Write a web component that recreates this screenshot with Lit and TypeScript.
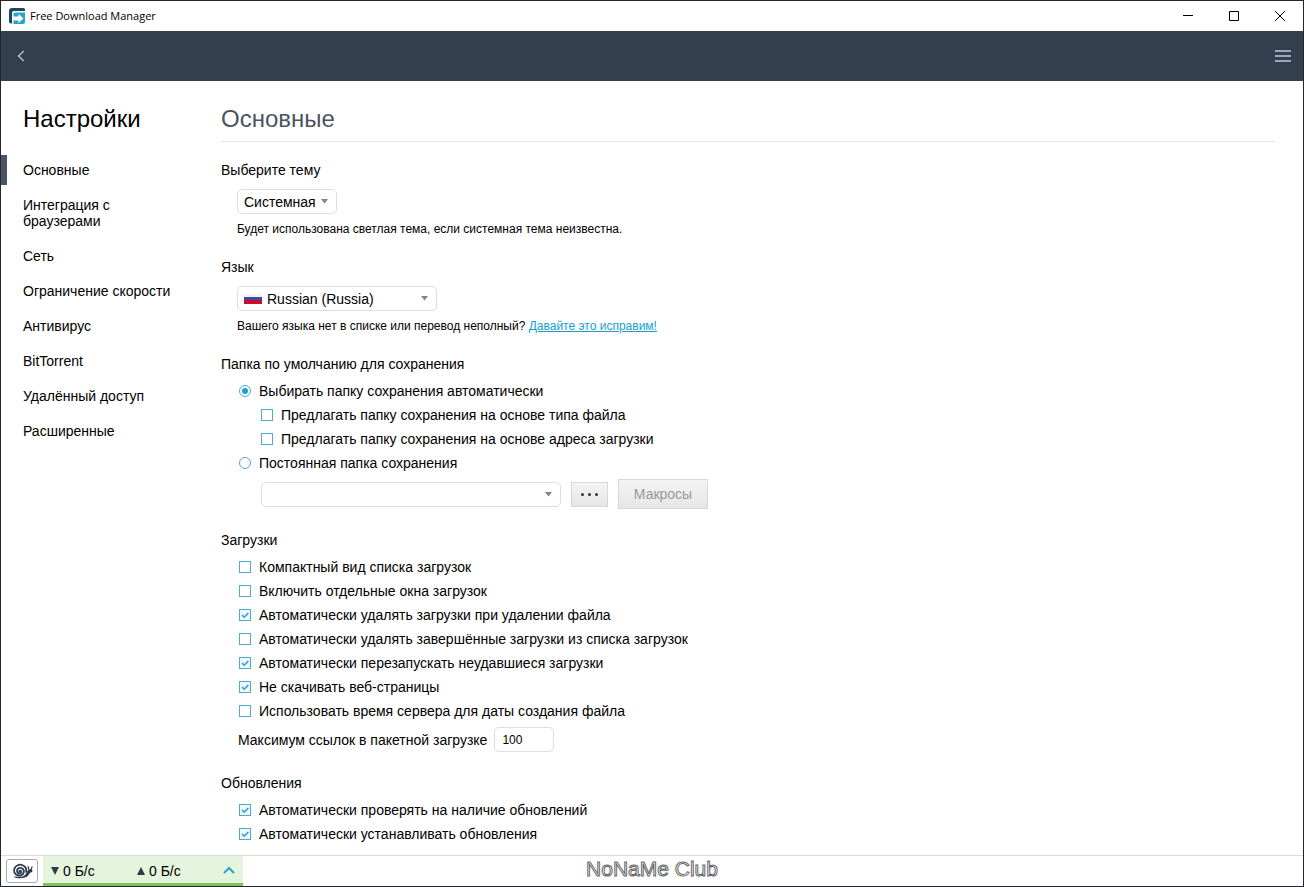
import { LitElement, html, css, svg } from "lit";
import { customElement, state } from "lit/decorators.js";
import { classMap } from "lit/directives/class-map.js";

interface Option {
  id: string;
  label: string;
  checked: boolean;
}

const NAV = [
  "Основные",
  "Интеграция с браузерами",
  "Сеть",
  "Ограничение скорости",
  "Антивирус",
  "BitTorrent",
  "Удалённый доступ",
  "Расширенные",
];

const FOLDER: Option[] = [
  { id: "by-type", label: "Предлагать папку сохранения на основе типа файла", checked: false },
  { id: "by-url", label: "Предлагать папку сохранения на основе адреса загрузки", checked: false },
];

const DOWNLOADS: Option[] = [
  { id: "compact", label: "Компактный вид списка загрузок", checked: false },
  { id: "windows", label: "Включить отдельные окна загрузок", checked: false },
  { id: "auto-remove", label: "Автоматически удалять загрузки при удалении файла", checked: true },
  { id: "remove-done", label: "Автоматически удалять завершённые загрузки из списка загрузок", checked: false },
  { id: "restart", label: "Автоматически перезапускать неудавшиеся загрузки", checked: true },
  { id: "no-web", label: "Не скачивать веб-страницы", checked: true },
  { id: "server-time", label: "Использовать время сервера для даты создания файла", checked: false },
];

const UPDATES: Option[] = [
  { id: "check", label: "Автоматически проверять на наличие обновлений", checked: true },
  { id: "install", label: "Автоматически устанавливать обновления", checked: true },
];

const caret = svg`<path d="M0 0h7L3.5 4.500z" fill="#858585"/>`;

@customElement("app-root")
export class AppRoot extends LitElement {
  @state() private active = 0;

  static styles = css`
    :host {
      display: flex;
      flex-direction: column;
      box-sizing: border-box;
      min-height: 100vh;
      border: 1px solid #25262b;
      background: #fff;
      color: #000;
      font-family: "Liberation Sans", Arial, sans-serif;
      font-size: 14px;
      line-height: 16px;
    }
    * {
      box-sizing: border-box;
    }
    button,
    input,
    select {
      font: inherit;
      color: inherit;
      margin: 0;
    }
    button {
      padding: 0;
      border: 0;
      background: none;
      display: flex;
      align-items: center;
      justify-content: center;
    }
    svg {
      display: block;
      flex: none;
    }
    h1,
    h2,
    h3,
    p {
      margin: 0;
      font-weight: normal;
    }
    .titlebar {
      display: flex;
      height: 30px;
      padding-left: 8px;
      align-items: center;
      gap: 5px;
      font-family: "Open Sans", "Noto Sans", sans-serif;
      font-size: 11px;
    }
    .caption {
      flex: 1;
    }
    .controls {
      display: flex;
    }
    .win {
      width: 46px;
      height: 30px;
    }
    .toolbar {
      display: flex;
      align-items: center;
      justify-content: space-between;
      height: 50px;
      padding: 0 12px 0 10px;
      background: #333f4f;
    }
    .tool {
      min-width: 16px;
      height: 30px;
    }
    .back {
      width: 20px;
    }
    .body {
      flex: 1;
      display: flex;
    }
    .sidebar {
      flex: none;
      width: 220px;
      padding-top: 22px;
    }
    h1,
    h2 {
      font-size: 24px;
      line-height: 32px;
    }
    h1 {
      padding-left: 22px;
      margin-bottom: 20px;
    }
    h2 {
      color: #4b5463;
      padding-bottom: 6px;
      border-bottom: 1px solid #e8e8e8;
      margin-bottom: 16px;
    }
    .nav {
      display: flex;
      flex-direction: column;
      gap: 5px;
    }
    .link {
      padding: 7px 40px 7px 16px;
      border-left: 6px solid transparent;
      color: inherit;
      text-decoration: none;
    }
    .link.active {
      border-left-color: #4b5463;
    }
    .main {
      flex: 1;
      min-width: 0;
      padding: 22px 28px 9px 0;
    }
    .section {
      margin-bottom: 19px;
    }
    .section.short {
      margin-bottom: 14px;
    }
    .section:last-child {
      margin-bottom: 0;
    }
    h3 {
      font-size: 14px;
      line-height: 24px;
      margin-bottom: 3px;
    }
    .fields {
      padding-left: 16px;
    }
    .short .fields {
      padding-top: 4px;
    }
    .hint {
      font-size: 12px;
      line-height: 24px;
      padding-top: 3px;
    }
    .hint a {
      color: #16a0cb;
    }
    .combo {
      display: grid;
      align-items: center;
      height: 25px;
    }
    .combo > * {
      grid-area: 1 / 1;
    }
    .combo svg {
      pointer-events: none;
    }
    .combo .caret {
      justify-self: end;
      margin-right: 9px;
    }
    .combo .flag {
      margin-left: 7px;
    }
    select,
    .count {
      appearance: none;
      width: 100%;
      height: 25px;
      padding: 0 7px;
      border: 1px solid #dedede;
      border-radius: 5px;
      background: #fff;
    }
    select {
      padding: 0 20px 0 6px;
    }
    .theme {
      width: 100px;
    }
    .language {
      width: 200px;
    }
    .language select {
      padding-left: 29px;
    }
    .folder {
      width: 300px;
    }
    .row {
      display: flex;
      align-items: center;
      gap: 8px;
      height: 24px;
      padding-left: 2px;
    }
    .nested {
      padding-left: 24px;
    }
    .box {
      appearance: none;
      width: 12px;
      height: 12px;
      border: 1px solid #4fa9cc;
      background: #fff;
      display: grid;
      place-items: center;
    }
    .box:checked {
      background: #eef9fd
        url("data:image/svg+xml,%3Csvg xmlns='http://www.w3.org/2000/svg' width='10' height='10'%3E%3Cpath d='M2 5l2.200 2.200L8.300 3' fill='none' stroke='%232f9dc6' stroke-width='1.600'/%3E%3C/svg%3E")
        center no-repeat;
    }
    .radio {
      border-radius: 50%;
    }
    .radio:checked {
      background: #fff;
    }
    .radio:checked::after {
      content: "";
      width: 6px;
      height: 6px;
      border-radius: 50%;
      background: #179fe0;
    }
    .path {
      display: flex;
      align-items: center;
      gap: 10px;
      padding: 4px 0 0 24px;
    }
    .push {
      border: 1px solid #d8d8d8;
      background: linear-gradient(#f4f4f4, #e6e6e6);
    }
    .dots {
      width: 37px;
      height: 25px;
    }
    .macros {
      width: 90px;
      height: 30px;
      color: #999;
    }
    .batch {
      display: flex;
      align-items: center;
      gap: 7px;
      padding: 4px 0 0 1px;
    }
    .count {
      width: 60px;
      font-size: 12px;
    }
    .footer {
      display: grid;
      grid-template-columns: 1fr auto 1fr;
      align-items: center;
      height: 31px;
      border-top: 1px solid #d9d9d9;
    }
    .status {
      display: flex;
      align-items: center;
      gap: 5px;
      padding-left: 5px;
    }
    .snail {
      width: 32px;
      height: 24px;
      border: 1px solid #a7a9b5;
      border-radius: 3px;
    }
    .speeds {
      display: flex;
      align-items: center;
      width: 200px;
      height: 30px;
      padding: 0 8px;
      border-bottom: 3px solid #7ac65c;
      background: #e5f4dc;
      justify-content: space-between;
    }
    .speed {
      display: flex;
      align-items: center;
      gap: 4px;
      padding-top: 2px;
    }
    .mark {
      font-size: 21px;
      line-height: 24px;
      padding-bottom: 4px;
      color: #fff;
      -webkit-text-stroke: 1px #666;
    }
  `;

  private row(o: Option, nested = false) {
    return html`<label class=${classMap({ row: true, nested })}>
      <input class="box" type="checkbox" name=${o.id} .checked=${o.checked} />${o.label}
    </label>`;
  }

  private caret() {
    return html`<svg class="caret" width="7" height="5" viewBox="0 0 7 5">${caret}</svg>`;
  }

  render() {
    return html`
      <header class="titlebar">
        <svg width="16" height="16" viewBox="0 0 16 16">
          <path d="M3 0h11.500A1.500 1.500 0 0 1 16 1.500V3H5a2 2 0 0 0-2 2v10.500H2A2 2 0 0 1 0 13.500V3a3 3 0 0 1 3-3z" fill="#1d4a5e" />
          <path d="M6 4.500h10V14a2 2 0 0 1-2 2H4.500v-3.500h5V15l5-4.500-5-4.500v2.500h-5V6A1.500 1.500 0 0 1 6 4.500z" fill="#25a5c8" />
        </svg>
        <span class="caption">Free Download Manager</span>
        <div class="controls">
          <button class="win" aria-label="Свернуть">
            <svg width="10" height="10"><path d="M0 4.500h10" stroke="#000" /></svg>
          </button>
          <button class="win" aria-label="Развернуть">
            <svg width="10" height="10"><path d="M.5.5h9v9h-9z" fill="none" stroke="#000" /></svg>
          </button>
          <button class="win" aria-label="Закрыть">
            <svg width="10" height="10"><path d="M0 0l10 10m0-10L0 10" stroke="#000" /></svg>
          </button>
        </div>
      </header>
      <div class="toolbar">
        <button class="tool back" aria-label="Назад">
          <svg width="8" height="12"><path d="M6.800 1L1.500 6l5.300 5" fill="none" stroke="#b4bdc8" stroke-width="1.500" /></svg>
        </button>
        <button class="tool" aria-label="Меню">
          <svg width="16" height="12"><path d="M0 1h16M0 6h16M0 11h16" stroke="#9aa9ba" stroke-width="2" /></svg>
        </button>
      </div>
      <div class="body">
        <aside class="sidebar">
          <h1>Настройки</h1>
          <nav class="nav">
            ${NAV.map(
              (t, i) => html`<a
                href="#"
                class=${classMap({ link: true, active: i === this.active })}
                @click=${(e: Event) => {
                  e.preventDefault();
                  this.active = i;
                }}
                >${t}</a
              >`
            )}
          </nav>
        </aside>
        <main class="main">
          <h2>Основные</h2>
          <section class="section short">
            <h3><label for="theme">Выберите тему</label></h3>
            <div class="fields">
              <div class="combo theme">
                <select id="theme"><option>Системная</option></select>${this.caret()}
              </div>
              <p class="hint">Будет использована светлая тема, если системная тема неизвестна.</p>
            </div>
          </section>
          <section class="section short">
            <h3><label for="lang">Язык</label></h3>
            <div class="fields">
              <div class="combo language">
                <select id="lang"><option>Russian (Russia)</option></select>
                <svg class="flag" width="18" height="12">
                  <path d="M0 1h18v4H0z" fill="#f4f4f4" />
                  <path d="M0 4h18v4H0z" fill="#3c4ba0" />
                  <path d="M0 7h18v4H0z" fill="#c8102e" />
                </svg>
                ${this.caret()}
              </div>
              <p class="hint">
                Вашего языка нет в списке или перевод неполный? <a href="#">Давайте это исправим!</a>
              </p>
            </div>
          </section>
          <section class="section">
            <h3>Папка по умолчанию для сохранения</h3>
            <div class="fields">
              <label class="row">
                <input class="box radio" type="radio" name="folder" checked />Выбирать папку сохранения автоматически
              </label>
              ${FOLDER.map((o) => this.row(o, true))}
              <label class="row">
                <input class="box radio" type="radio" name="folder" />Постоянная папка сохранения
              </label>
              <div class="path">
                <div class="combo folder">
                  <select aria-label="Папка сохранения"><option></option></select>${this.caret()}
                </div>
                <button class="push dots" aria-label="Обзор">
                  <svg width="17" height="3" fill="#333">
                    <circle cx="1.500" cy="1.500" r="1.500" /><circle cx="8.500" cy="1.500" r="1.500" /><circle cx="15.500" cy="1.500" r="1.500" />
                  </svg>
                </button>
                <button class="push macros" disabled>Макросы</button>
              </div>
            </div>
          </section>
          <section class="section">
            <h3>Загрузки</h3>
            <div class="fields">
              ${DOWNLOADS.map((o) => this.row(o))}
              <div class="batch">
                <label for="count">Максимум ссылок в пакетной загрузке</label>
                <input id="count" class="count" type="text" inputmode="numeric" value="100" />
              </div>
            </div>
          </section>
          <section class="section">
            <h3>Обновления</h3>
            <div class="fields">${UPDATES.map((o) => this.row(o))}</div>
          </section>
        </main>
      </div>
      <footer class="footer">
        <div class="status">
          <button class="snail" aria-label="Режим улитки">
            <svg width="22" height="16" viewBox="0 0 22 16" fill="none" stroke="#2f3b4c" stroke-linecap="round">
              <path
                d="M8.300 8.400c.2-1.300 2.200-1 2 .5-.2 1.700-2.900 2-3.900.3C5.300 7.200 6.700 4.900 9 4.800c2.700-.1 4.300 2.200 3.800 4.500-.6 2.700-3.700 3.900-6.300 2.900C3.400 11 2.300 8 3.500 5.300 4.800 2.500 8.100 1 11.100 2c3 1 4.500 3.900 4.100 6.800"
                stroke-width="1.800"
              />
              <path d="M2.500 13.400c2.500 1.900 6 2 9 1.700 3.600-.4 6.300-2.300 7.500-5.300l2.200-.9c.7-1.800-.5-3-2.100-2.700-2 .3-2.800 1.700-3.400 3.300-1 2.400-2.700 3.600-5 4.200z" fill="#2f3b4c" stroke="none" />
              <path d="M18 6.800l-.9-3.300M20.200 6.800l.8-3" stroke-width="1.200" />
            </svg>
          </button>
          <button class="speeds" aria-label="Скорость">
            <span class="speed">
              <svg width="8" height="8"><path d="M0 0h8L4 8z" fill="#2f3b4c" /></svg>0 Б/с
            </span>
            <span class="speed">
              <svg width="8" height="8"><path d="M0 8h8L4 0z" fill="#2f3b4c" /></svg>0 Б/с
            </span>
            <svg width="12" height="8"><path d="M1 7l5-5 5 5" fill="none" stroke="#2aa3cf" stroke-width="2" /></svg>
          </button>
        </div>
        <div class="mark">NoNaMe Club</div>
      </footer>
    `;
  }
}
